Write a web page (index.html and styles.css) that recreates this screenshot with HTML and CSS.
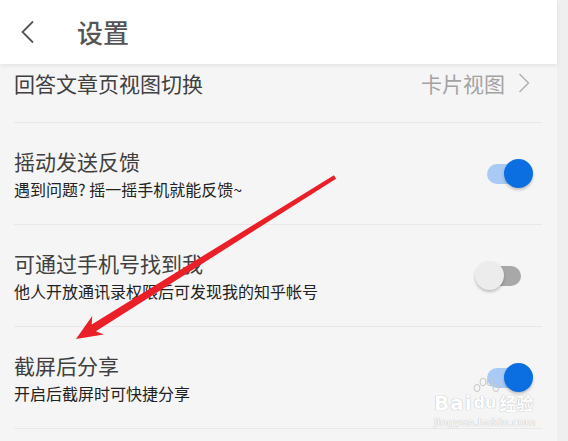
FILE: index.html
```html
<!DOCTYPE html>
<html lang="zh-CN">
  <head>
    <meta charset="UTF-8" />
    <meta name="viewport" content="width=device-width, initial-scale=1.0" />
    <title>设置</title>
    <link rel="stylesheet" href="styles.css">
  </head>
  <body>
    <div class="screen">
      <div class="page">
        <header class="app-bar">
          <svg class="back" width="16" height="24" viewBox="0 0 16 24">
            <path d="M13 1.5 L2.5 12 L13 22.5" fill="none" stroke="#555" stroke-width="1.8" />
          </svg>
          <h1 class="app-title">设置</h1>
        </header>

        <div class="list">
          <div class="row row--first">
            <div class="row-title">回答文章页视图切换</div>
            <div class="row-value">
              卡片视图
              <svg width="12" height="20" viewBox="0 0 12 20">
                <path d="M1.5 1 L10.5 10 L1.5 19" fill="none" stroke="#b3b3b3" stroke-width="1.5" />
              </svg>
            </div>
          </div>

          <div class="row">
            <div class="row-text">
              <div class="row-title">摇动发送反馈</div>
              <div class="row-sub">遇到问题? 摇一摇手机就能反馈~</div>
            </div>
            <span class="switch switch--on"></span>
          </div>

          <div class="row">
            <div class="row-text">
              <div class="row-title">可通过手机号找到我</div>
              <div class="row-sub">他人开放通讯录权限后可发现我的知乎帐号</div>
            </div>
            <span class="switch switch--off"></span>
          </div>

          <div class="row">
            <div class="row-text">
              <div class="row-title">截屏后分享</div>
              <div class="row-sub">开启后截屏时可快捷分享</div>
            </div>
            <span class="switch switch--on"></span>
          </div>
        </div>
      </div>
      <div class="rail"></div>

      <!-- annotation arrow drawn over the screenshot -->
      <svg class="arrow" width="568" height="441" viewBox="0 0 568 441">
        <polygon fill="#ea1f27"
          points="336.1,178.7 95.9,331.2 103.8,334.5 76,339 92.2,315.9 91.7,324.4 333.9,175.3" />
      </svg>

      <div class="watermark">
        <svg class="wm-paw" width="34" height="16" viewBox="0 0 34 16">
          <g fill="none" stroke="#c8c8c8" stroke-width="1">
            <ellipse cx="8" cy="11" rx="3" ry="3.5" />
            <ellipse cx="14" cy="5" rx="3" ry="3.8" />
            <ellipse cx="21" cy="5" rx="3" ry="3.8" />
            <ellipse cx="27" cy="11" rx="3" ry="3.5" />
          </g>
        </svg>
        <div class="wm-top">
          <span class="wm-bai">Bai</span>
          <span class="wm-du">du</span>
          <span class="wm-cn">经验</span>
        </div>
        <div class="wm-url">jingyan.baidu.com</div>
      </div>
    </div>
  </body>
</html>
```

FILE: styles.css
```css
:root {
  --bg: #f5f5f5;
  --line: #e8e8e8;
  --title: #404040;
  --sub: #222;
  --muted: #a3a3a3;
  --blue: #0b6fe2;
  --blue-light: #a9caf4;
}
* {
  box-sizing: border-box;
  margin: 0;
  padding: 0;
}
body {
  font-family: "Noto Sans CJK SC", "Noto Sans", sans-serif;
  background: var(--bg);
  width: 568px;
  height: 441px;
  overflow: hidden;
}
.screen {
  position: relative;
  display: flex;
  width: 568px;
  height: 441px;
}
.page {
  flex: 1;
  display: flex;
  flex-direction: column;
  background: var(--bg);
}
.rail {
  width: 11px;
  background: #efefef;
}
.app-bar {
  position: relative;
  z-index: 2;
  height: 64px;
  flex-shrink: 0;
  background: #fff;
  display: flex;
  align-items: center;
  padding-left: 20px;
  box-shadow: 0 2px 4px rgba(0, 0, 0, 0.07);
}
.back {
  display: block;
  margin-right: 41px;
}
.app-title {
  font-size: 26px;
  font-weight: 500;
  color: #555;
  line-height: 32px;
}
.list {
  padding-left: 14px;
  padding-right: 15px;
}
.row {
  display: flex;
  align-items: center;
  justify-content: space-between;
  height: 102px;
  border-bottom: 1px solid var(--line);
}
.row--first {
  height: 59px;
  align-items: flex-start;
  padding-top: 5px;
}
.row-title {
  font-size: 21px;
  line-height: 28px;
  color: var(--title);
}
.row-sub {
  margin-top: 3px;
  font-size: 16px;
  line-height: 22px;
  color: var(--sub);
}
.row-value {
  display: flex;
  align-items: center;
  gap: 13px;
  font-size: 21px;
  line-height: 28px;
  color: var(--muted);
  margin-right: 12px;
}
.switch {
  position: relative;
  width: 46px;
  height: 30px;
  flex-shrink: 0;
}
.switch::before {
  content: "";
  position: absolute;
  top: 5px;
  height: 20px;
  width: 38px;
  border-radius: 10px;
}
.switch::after {
  content: "";
  position: absolute;
  top: 0;
  width: 29px;
  height: 29px;
  border-radius: 50%;
  box-shadow: 0 2px 3px rgba(0, 0, 0, 0.22);
}
.switch--on {
  margin-right: 9px;
}
.switch--on::before {
  left: 0;
  background: var(--blue-light);
}
.switch--on::after {
  right: 0;
  background: var(--blue);
}
.switch--off {
  margin-right: 21px;
}
.switch--off::before {
  right: 0;
  width: 36px;
  background: #a8a8a8;
}
.switch--off::after {
  left: 0;
  background: #ececec;
}
.arrow {
  position: absolute;
  top: 0;
  left: 0;
  pointer-events: none;
}
.watermark {
  position: absolute;
  left: 434px;
  top: 377px;
  color: #fff;
  font-family: "DejaVu Sans", sans-serif;
  text-shadow: 0 0 1px #bdbdbd, 0 0 1px #bdbdbd;
}
.wm-paw {
  display: block;
  margin-left: 35px;
}
.wm-top {
  display: flex;
  align-items: flex-end;
  gap: 1px;
  line-height: 20px;
}
.wm-bai {
  font-size: 20px;
  font-weight: bold;
  letter-spacing: 1px;
}
.wm-du {
  font-size: 16px;
  font-weight: bold;
}
.wm-cn {
  font-family: "Noto Sans CJK SC", sans-serif;
  font-size: 17px;
  font-weight: bold;
  margin-left: 2px;
}
.wm-url {
  font-size: 11px;
  line-height: 16px;
  margin-top: 2px;
}
```
